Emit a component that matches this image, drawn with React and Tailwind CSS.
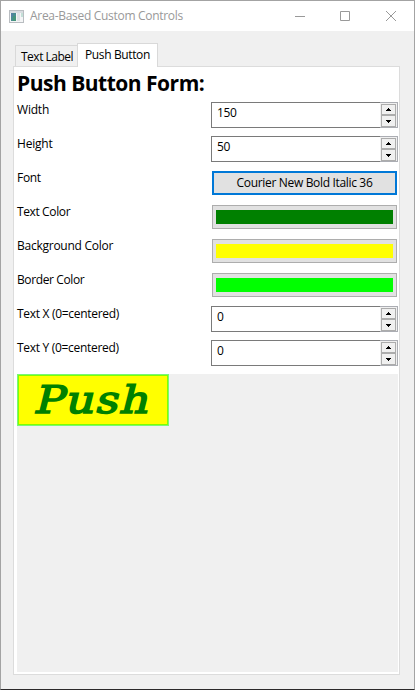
import React from 'react';

function Spin({ value }) {
  return (
    <div className="mt-1 flex h-[26px] w-[187px] bg-white">
      <div className="flex-1 border border-r-0 border-[#7a7a7a] pt-px pl-[5px] leading-[18px] tracking-[-0.3px]">{value}</div>
      <div className="flex w-[18px] flex-col border border-l-0 border-[#abadb3] bg-[#f0f0f0] pt-px pl-px">
        <div className="flex h-[11px] w-[15px] items-center justify-center border border-[#acacac]">
          <svg width="5" height="3" shapeRendering="crispEdges"><path d="M2 0h1v1h1v1h1v1H0V2h1V1h1z" /></svg>
        </div>
        <div className="flex h-[12px] w-[15px] items-center justify-center border border-[#acacac]">
          <svg width="5" height="3" shapeRendering="crispEdges"><path d="M0 0h5v1H4v1H3v1H2V2H1V1H0z" /></svg>
        </div>
      </div>
    </div>
  );
}

function Swatch({ color }) {
  return (
    <button className="mt-[5px] ml-px block h-[24px] w-[185px] border border-[#adadad] bg-[#e1e1e1] px-[3px] py-[4px]">
      <span className={`block h-[14px] ${color}`} />
    </button>
  );
}

function Row({ label, track, children }) {
  return (
    <div className="flex h-[34px]">
      <div className={`w-[194px] pt-[3px] leading-[18px] whitespace-nowrap ${track}`}>{label}</div>
      {children}
    </div>
  );
}

export default function App() {
  return (
    <div className="flex h-[690px] w-[415px] flex-col overflow-hidden border border-[#a3a3a3] border-b-[#2b292a] bg-[#f0f0f0] font-['Open_Sans','Noto_Sans',sans-serif] text-[12px] text-black">
      <header className="flex h-[30px] shrink-0 items-center bg-white text-[#999999]">
        <svg className="ml-[8px] shrink-0" width="15" height="13" viewBox="0 0 15 13" shapeRendering="crispEdges">
          <rect width="15" height="13" fill="#b9bdc1" />
          <rect x="1" y="1" width="13" height="2" fill="#d8dce0" />
          <rect x="1" y="3" width="13" height="9" fill="#f4f5f6" />
          <rect x="2" y="3" width="5" height="8" fill="#498d91" />
          <rect x="2" y="3" width="2" height="4" fill="#5381a0" />
          <rect x="4" y="6" width="3" height="5" fill="#45957a" />
          <rect x="8" y="3" width="3" height="8" fill="#e0e2e5" />
          <rect x="12" y="3" width="2" height="4" fill="#c3dfd7" />
        </svg>
        <h1 className="ml-[6px] flex-1 text-[12px] leading-[18px] whitespace-nowrap tracking-[-0.3px]">Area-Based Custom Controls</h1>
        <svg className="mr-[17px] shrink-0" width="102" height="12" viewBox="0 0 102 12" fill="none" stroke="#999999">
          <path d="M0 6.5h10M45.5 1.5h9v9h-9z" />
          <path d="m91 1 10 10m0-10L91 11" />
        </svg>
      </header>

      <nav className="mt-[12px] flex h-[23px] shrink-0 items-end pl-[14px]">
        <div className="h-[21px] w-[62px] border border-r-0 border-b-0 border-[#d9d9d9] pl-[5px] leading-[21px] whitespace-nowrap tracking-[-0.5px]">Text Label</div>
        <div className="relative z-10 -mb-px h-[24px] w-[81px] border border-b-0 border-[#d9d9d9] bg-white pl-[7px] leading-[21px] whitespace-nowrap tracking-[-0.37px]">Push Button</div>
      </nav>

      <main className="mx-[12px] flex h-[609px] w-[387px] shrink-0 flex-col border border-[#dcdcdc] bg-white pl-[3px]">
        <h2 className="h-[31px] text-[21px] leading-[32px] font-bold whitespace-nowrap tracking-[-0.5px]">Push Button Form:</h2>
        <Row label="Width" track="tracking-[-0.2px]"><Spin value="150" /></Row>
        <Row label="Height" track="tracking-[-0.2px]"><Spin value="50" /></Row>
        <Row label="Font" track="tracking-[-0.3px]">
          <button className="mt-[5px] ml-px h-[24px] w-[185px] border-2 border-[#0078d7] bg-[#e1e1e1] leading-[20px] whitespace-nowrap tracking-[-0.33px]">Courier New Bold Italic 36</button>
        </Row>
        <Row label="Text Color" track="tracking-[-0.38px]"><Swatch color="bg-[#008000]" /></Row>
        <Row label="Background Color" track="tracking-[-0.25px]"><Swatch color="bg-[#ffff00]" /></Row>
        <Row label="Border Color" track="tracking-[-0.38px]"><Swatch color="bg-[#00ff00]" /></Row>
        <Row label="Text X (0=centered)" track="tracking-[-0.3px]"><Spin value="0" /></Row>
        <Row label="Text Y (0=centered)" track="tracking-[-0.3px]"><Spin value="0" /></Row>
        <div className="mt-[4px] h-[298px] w-[381px] bg-[#f0f0f0]">
          <div className="h-[52px] w-[152px] border border-[#78f778] bg-[#ffff00]">
            <div className="flex h-[50px] items-center justify-center border border-[#80ff00] text-[#008000]">
              <span className="ml-[3px] block -skew-x-12 scale-x-[1.18] font-['DejaVu_Serif',serif] text-[38px] leading-[48px] tracking-[1px] [-webkit-text-stroke:1.5px_#008000]">Push</span>
            </div>
          </div>
        </div>
      </main>
    </div>
  );
}
